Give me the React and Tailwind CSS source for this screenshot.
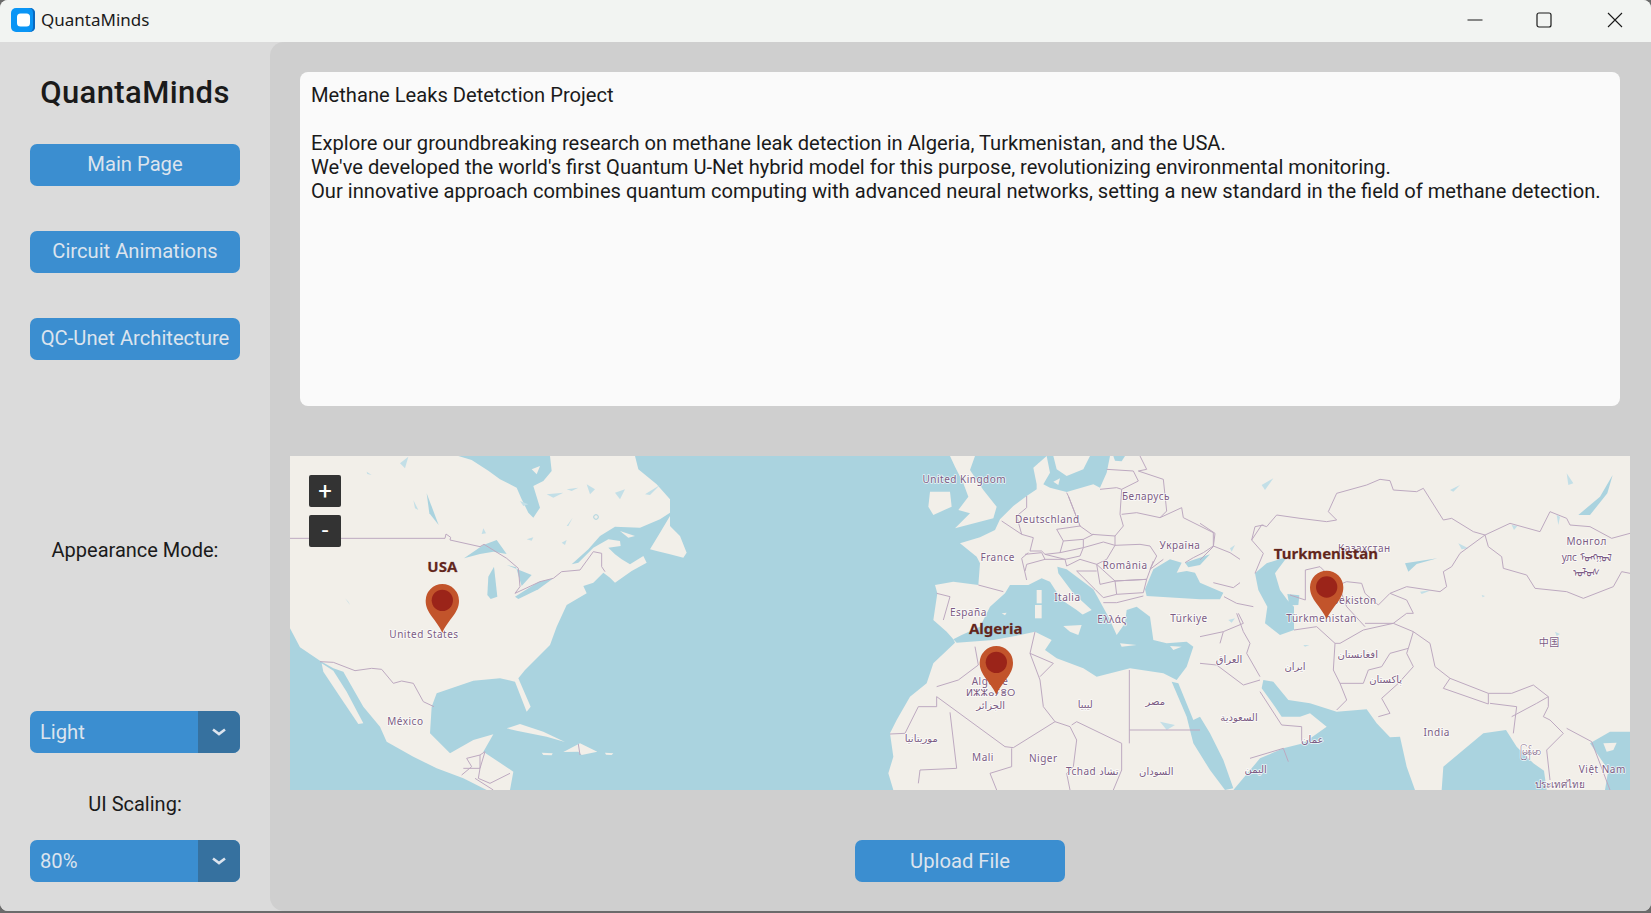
const LAND = "#f2efe9";
const WATER = "#aad3df";
const LAKE = "#c3dfe7";
const BORDER = "#bda9c0";

const naLand = [
  "30,18 535,18 575,30 625,62 660,88 710,113 725,148 745,188 760,203 780,173 760,108 790,93 815,63 810,18 1065,18 1075,58 1130,103 1170,148 1170,188 1140,208 1080,233 1005,230 960,258 925,298 875,343 895,338 940,293 985,268 1020,273 1022,288 985,293 1005,313 1025,328 1050,343 1090,318 1100,338 1055,363 1005,398 990,383 970,368 940,398 910,408 920,430 860,465 830,530 810,585 735,660 715,685 752,770 740,785 705,695 660,685 580,692 470,730 455,770 450,850 510,910 580,870 640,853 610,905 700,965 690,1020 620,1020 550,985 470,955 400,920 320,875 300,830 250,770 190,665 160,655 120,632 60,592 30,535",
  "125,640 160,662 200,725 250,820 235,822 180,740 130,665",
];
const naIslands = [
  "680,835 720,822 790,845 855,876 800,860 710,842",
  "850,906 900,880 952,905 905,915 895,905",
  "785,908 818,910 815,916 790,915",
  "975,908 1000,910 995,915 978,914",
  "1110,298 1140,248 1170,198 1170,228 1200,258 1220,308 1210,323 1170,313 1130,303",
  "1020,243 1065,258 1045,263",
  "755,58 780,48 770,73",
];
const naWater = [
  "552,325 610,285 650,270 680,312 640,305 600,312",
  "622,435 625,380 642,350 652,440 632,447",
  "680,345 755,375 725,408 708,352",
  "705,440 775,396 820,385 775,418 715,447",
  "440,130 476,225 448,190",
];
const naLakes = [
  "400,150 415,180 405,175",
  "205,455 195,445 210,465",
  "610,235 618,250 605,252",
  "260,65 275,75 262,72",
  "360,40 385,20 375,55",
  "720,153 745,163 730,168",
  "800,133 850,128 820,143",
  "860,118 895,113 875,123",
  "920,103 945,118 930,133",
  "1005,128 1035,118 1020,148",
  "860,228 878,203 865,228",
  "845,278 860,270 855,285",
  "740,268 760,262 755,272",
  "1095,133 1140,105 1110,135",
];
const naBorders = [
  "30,265 495,265 498,252 512,262 510,270 600,290 612,283 680,325 715,355 720,410 705,430 780,395 820,385 845,365 900,360 940,305 965,310 965,350 975,365",
  "120,635 160,637 225,662 275,655 305,658 340,700 365,693 400,700 430,755 462,770",
  "545,975 575,950 560,925 600,915 600,955 550,955",
  "600,915 615,905 600,955 595,985 630,1000 690,970",
  "585,985 640,1020",
  "895,882 900,915",
];

const euLand = "980,18 940,53 950,103 950,118 920,138 880,168 840,208 825,240 780,262 720,280 770,320 780,340 775,405 700,395 645,405 652,430 640,510 680,545 700,568 705,578 640,640 620,700 570,740 530,810 510,850 520,920 505,970 520,1020 1440,1020 1440,18";
const euIslands = [
  "690,18 765,18 750,60 790,120 830,170 820,205 705,235 750,190 715,180 745,140 730,100 705,50",
  "630,125 690,125 695,170 640,195 625,170",
];
const euWater = [
  "980,18 1000,18 1010,58 1040,78 1090,58 1110,18 1170,18 1160,68 1140,113 1120,103 1040,126 990,113 970,103 990,68",
  "1180,18 1215,18 1205,34 1185,32",
  "700,568 725,555 780,530 810,470 855,430 870,405 925,405 965,385 990,395 1025,450 1070,480 1112,512 1085,545 1060,530 1075,500 1115,480 1060,430 1015,370 1012,350 1040,358 1120,418 1165,500 1190,555 1215,520 1220,480 1250,470 1290,500 1300,570 1340,580 1400,575 1420,590 1400,650 1370,690 1330,670 1230,655 1130,680 1090,655 1010,625 975,600 995,570 945,545 900,555 820,570 710,578",
  "1275,418 1300,358 1350,328 1385,338 1370,368 1400,363 1425,368 1440,398 1510,428 1500,448 1440,448 1280,438",
  "1395,338 1470,313 1440,345 1405,352",
  "1420,810 1440,800 1470,850 1510,930 1540,1015 1515,1020 1470,960 1420,880 1400,800 1355,695 1375,700",
];
const euLakes = ["1320,815 1365,825 1340,840"];
const euOnWater = [
  "1030,528 1085,525 1075,555 1050,545",
  "950,420 965,420 965,460 950,460",
  "945,465 965,465 965,505 945,505",
  "1200,580 1250,585 1205,590",
  "1350,588 1385,590 1360,600",
  "845,490 860,488 855,496",
  "955,40 985,55 965,75",
  "1000,95 1020,85 1015,105",
];
const euBorders = [
  "650,710 715,690 775,645 765,590",
  "650,740 650,770 595,770 555,850 510,852",
  "650,740 855,890 880,893 1005,815 970,770 960,690 930,610 945,545",
  "930,610 1000,640 960,680",
  "690,787 710,955 600,960 595,1000",
  "875,895 875,950 810,970 830,1020",
  "1005,815 1050,830 1070,870 1060,950 1040,970 1050,1020",
  "1055,825 1070,815 1205,880 1205,960 1180,1020",
  "1228,660 1228,880",
  "1228,840 1440,840",
  "925,308 905,325 920,390",
  "775,405 850,425",
  "650,430 690,440 670,510",
];
const centralEurope = [
  "80,120 80,155 50,180 65,235 100,245 90,285 125,285 135,295 180,290 190,255 170,220 240,210 205,120 200,110",
  "205,120 240,210 275,235 345,240 370,210 360,175 365,100 350,95 300,100",
  "190,255 250,250 280,235",
  "250,250 250,275 310,258 345,268 345,240",
  "365,175 410,170 480,185 500,165 490,70 415,45 440,40 420,0",
  "320,40 400,45 415,75 365,100",
  "480,185 545,155 550,185 640,230 640,270 610,290 580,305 555,320",
  "345,268 420,265 450,270 470,300 450,340 490,310",
  "345,268 320,310 290,325 345,375 440,370 460,315",
  "180,290 250,275 240,300 195,310 135,295",
  "75,295 125,290 135,310 80,325 75,345",
  "135,310 195,310 200,330 240,310",
  "240,310 290,325 300,385 345,375 350,415 310,425 285,400 230,345 290,345",
  "345,375 440,370 430,410 350,415",
  "310,440 350,440 430,420",
  "5,195 65,235",
  "640,380 700,395 720,380",
  "640,270 690,290 720,310",
];

const asWater = [
  "100,1020 180,925 250,895 310,880 380,830 330,790 300,800 245,800 225,770 185,715 190,690 220,695 265,750 330,760 410,785 500,778 530,820 570,862 600,860 620,950 645,1020",
  "725,1020 730,950 850,850 918,840 950,890 1000,940 1032,962 1040,1020",
  "1215,1020 1225,960 1170,880 1230,845 1290,845 1290,1020",
  "165,370 200,340 262,320 225,370 240,420 262,450 282,470 282,540 240,555 195,520 202,470 175,420",
  "262,432 298,436 295,465 268,466",
  "615,340 712,325 650,342 625,365",
  "1135,195 1200,140 1238,75 1222,130 1170,195",
];
const asLakes = [
  "1070,195 1080,200 1075,225",
  "935,225 952,228 942,240",
  "660,425 695,420 665,432",
  "775,280 805,295 785,298",
  "845,435 855,438 848,442",
  "1065,545 1080,552 1070,558",
  "85,510 105,505 95,518",
  "185,105 220,85 195,120",
  "90,295 105,285 95,305",
  "1100,70 1120,100 1105,105",
  "750,120 780,105 760,125",
  "310,585 328,585 315,590",
];
const asIslands = ["1210,880 1250,878 1240,900 1220,905"];
const asBorders = [
  "155,270 185,225 200,230 230,195 300,205 380,215 410,210 385,185 410,130 500,105 540,88 570,92 580,120 650,125 670,115 730,210 755,205 820,245 855,255",
  "155,270 165,230 190,225",
  "155,270 190,310 165,370",
  "855,255 780,310 755,350 730,365 740,410 720,425 620,410 570,430 535,465 495,430 485,400 440,395 415,405 360,350 316,360 316,450 270,435",
  "855,255 930,220 1020,245 1050,185 1100,205 1110,225 1170,230 1235,265 1290,250",
  "855,255 865,290 905,320 910,355 980,375 1005,415 1100,425 1150,445 1240,410 1265,365 1290,370",
  "640,545 690,580 705,650 750,685 865,730 935,730 1000,705 1045,740 1045,770 1030,800 1050,810 1090,850",
  "750,685 730,715 865,762 865,730",
  "870,760 950,770 940,850",
  "935,800 1010,760 1045,740",
  "1090,850 1040,900 1050,990",
  "1100,835 1175,875 1230,1020",
  "405,580 420,580 490,540 580,520 640,545",
  "405,580 400,660 420,700 490,700 505,660 545,650 570,610 625,595 640,545",
  "420,700 440,750 410,780",
  "625,595 620,610 640,650 595,700 545,745 570,790 535,800",
  "110,490 130,545 150,580 140,610 180,680",
  "0,640 50,645 130,705 180,690",
  "0,560 70,545 130,520 115,490",
  "72,440 110,460 160,470",
  "282,540 350,530 405,580",
  "495,530 440,470 415,405",
  "495,520 580,520 620,490 640,490 620,450 570,430",
  "180,725 245,825 305,830 305,880",
  "150,925 250,895 265,935",
  "60,580 70,545",
  "0,220 45,250 40,290 0,330",
];

function Poly({ list, fill, stroke }) {
  return list.map((p, i) => (
    <polyline key={i} points={p} fill={fill || "none"} stroke={stroke || "none"} strokeWidth={stroke ? 3 : 0} strokeLinejoin="round" />
  ));
}

function L({ x, y, t, size = 30, sp = 1.5 }) {
  return (
    <text x={x} y={y} textAnchor="middle" dominantBaseline="central" fontSize={size} letterSpacing={sp} fill="#7c5c84" stroke="#ffffff" strokeOpacity="0.75" strokeWidth="5" paintOrder="stroke" strokeLinejoin="round">
      {t}
    </text>
  );
}

function B({ x, y, t }) {
  return (
    <text x={x} y={y} textAnchor="middle" dominantBaseline="central" fontSize="45" fontWeight="700" fill="#62261c" stroke="#62261c" strokeOpacity="0.5" strokeWidth="1">
      {t}
    </text>
  );
}

function Pin({ dx, dy }) {
  return (
    <g transform={`translate(${dx} ${dy})`}>
      <path d="M487 548C470 508 437 490 437 452A50 50 0 1 1 537 452C537 490 504 508 487 548Z" fill="#c2542b" />
      <circle cx="487" cy="451" r="32" fill="#9b2419" />
    </g>
  );
}

function MapArt() {
  return (
    <svg viewBox="30 18 4020 1002" className="block w-[1340px] h-[334px] font-['Noto_Sans','DejaVu_Sans','Noto_Sans_CJK_SC',sans-serif]">
      <rect x="30" y="18" width="4020" height="1002" fill={WATER} />
      <rect x="2760" y="18" width="1290" height="1002" fill={LAND} />
      <Poly list={naLand} fill={LAND} />
      <Poly list={naIslands} fill={LAND} />
      <Poly list={naWater} fill={WATER} />
      <Poly list={naLakes} fill={LAKE} />
      <circle cx="948" cy="201" r="7" fill="none" stroke={WATER} strokeWidth="3" />
      <Poly list={naBorders} stroke={BORDER} />

      <g transform="translate(1320 0)">
        <polygon points={euLand} fill={LAND} />
        <Poly list={euIslands} fill={LAND} />
        <Poly list={euWater} fill={WATER} />
        <Poly list={euLakes} fill={LAKE} />
        <Poly list={euOnWater} fill={LAND} />
        <Poly list={euBorders} stroke={BORDER} />
        <g transform="translate(840 18)">
          <Poly list={centralEurope} stroke={BORDER} />
        </g>
      </g>

      <g transform="translate(2760 0)">
        <Poly list={asWater} fill={WATER} />
        <Poly list={asLakes} fill={LAKE} />
        <Poly list={asIslands} fill={LAND} />
        <Poly list={asBorders} stroke={BORDER} />
      </g>

      <L x={432} y={551} t="United States" />
      <L x={376} y={814} t="México" />

      <g transform="translate(1320 0)">
        <L x={733} y={88} t="United Kingdom" />
        <L x={1278} y={137} t="Беларусь" />
        <L x={982} y={208} t="Deutschland" />
        <L x={1380} y={285} t="Україна" />
        <L x={833} y={321} t="France" />
        <L x={1215} y={344} t="România" />
        <L x={1042} y={442} t="Italia" />
        <L x={745} y={485} t="España" />
        <L x={1176} y={508} t="Ελλάς" />
        <L x={1407} y={503} t="Türkiye" />
        <L x={810} y={692} t="Algérie" />
        <L x={812} y={727} t="ⵍⵣⵣⴰⵢⴻⵔ" size={28} sp={0.5} />
        <L x={812} y={765} t="الجزائر" sp={0} />
        <L x={1096} y={762} t="ليبيا" sp={0} />
        <L x={1306} y={752} t="مصر" sp={0} />
        <L x={604} y={863} t="موريتانيا" sp={0} />
        <L x={789} y={922} t="Mali" />
        <L x={970} y={923} t="Niger" />
        <L x={1117} y={962} t="Tchad تشاد" />
        <L x={1309} y={962} t="السودان" sp={0} />
      </g>

      <g transform="translate(2760 0)">
        <L x={493} y={295} t="Казахстан" />
        <L x={1160} y={272} t="Монгол" />
        <L x={1160} y={320} t="улс ᠮᠣᠩᠭᠣᠯ" sp={0} size={30} />
        <L x={1160} y={366} t="ᠤᠯᠤᠰ" sp={0} size={30} />
        <L x={440} y={450} t="Oʻzbekiston" />
        <L x={365} y={505} t="Türkmenistan" />
        <L x={473} y={612} t="افغانستان" sp={0} />
        <L x={557} y={687} t="پاکستان" sp={0} />
        <L x={285} y={647} t="ایران" sp={0} />
        <L x={87} y={627} t="العراق" sp={0} />
        <L x={117} y={802} t="السعودية" sp={0} />
        <L x={337} y={867} t="عمان" sp={0} />
        <L x={167} y={958} t="اليمن" sp={0} />
        <L x={710} y={847} t="India" />
        <L x={1048} y={576} t="中国" />
        <L x={990} y={902} t="မြန်မာ" sp={0} />
        <L x={1207} y={957} t="Việt Nam" />
        <L x={1080} y={1003} t="ประเทศไทย" sp={0} />
      </g>

      <Pin dx={0} dy={0} />
      <Pin dx={1662} dy={186} />
      <Pin dx={2653} dy={-40} />

      <B x={487} y={347} t="USA" />
      <B x={2147} y={534} t="Algeria" />
      <B x={3138} y={309} t="Turkmenistan" />
    </svg>
  );
}

function Btn({ children }) {
  return (
    <button className="block w-[210px] h-[42px] shrink-0 rounded-[7px] bg-[#3b8ed0] text-[#dce4ee] text-[20.2px] leading-[40px] pb-[2px] text-center">
      {children}
    </button>
  );
}

function Select({ value, className }) {
  return (
    <div className={`w-[210px] h-[42px] shrink-0 rounded-[7px] overflow-hidden flex bg-[#3b8ed0] ${className || ""}`}>
      <div className="flex-1 pl-[10px] text-[#dce4ee] text-[20.2px] leading-[42px]">{value}</div>
      <div className="w-[42px] bg-[#36719f] flex items-center justify-center">
        <svg width="16" height="10" viewBox="0 0 16 10">
          <path d="M2 2.5L8 7L14 2.5" fill="none" stroke="#dce4ee" strokeWidth="2.6" />
        </svg>
      </div>
    </div>
  );
}

export default function App() {
  return (
    <div className="w-[1651px] h-[913px] bg-[#6b6b6b] overflow-hidden font-['Roboto',sans-serif]">
      <div className="h-[911px] rounded-[8px] overflow-hidden flex flex-col bg-[#dbdbdb]">
        <div className="h-[42px] shrink-0 bg-[#f2f4f2] flex items-center pb-[3px]">
          <svg width="24" height="24" viewBox="0 0 24 24" className="ml-[11px]">
            <rect width="24" height="24" rx="5" fill="#0a95f5" />
            <path d="M19 0H19A5 5 0 0 1 24 5V19A5 5 0 0 1 19 24H17Q22 24 22 19V5Q22 0 17 0Z" fill="#0a68c0" />
            <rect x="6" y="5.5" width="13" height="13" rx="3.5" fill="#ffffff" />
          </svg>
          <span className="ml-[6px] text-[17px] text-[#1a1a1a] font-['Noto_Sans',sans-serif]">QuantaMinds</span>
          <div className="ml-auto flex items-center">
            <svg width="16" height="16" viewBox="0 0 16 16" className="mr-[53px]">
              <path d="M0.5 8H15.5" stroke="#1a1a1a" strokeWidth="1" />
            </svg>
            <svg width="16" height="16" viewBox="0 0 16 16" className="mr-[55px]">
              <rect x="1" y="1" width="14" height="14" rx="2" fill="none" stroke="#1a1a1a" strokeWidth="1.2" />
            </svg>
            <svg width="16" height="16" viewBox="0 0 16 16" className="mr-[28px]">
              <path d="M1 1L15 15M15 1L1 15" stroke="#1a1a1a" strokeWidth="1.1" />
            </svg>
          </div>
        </div>

        <div className="flex-1 flex min-h-0">
          <aside className="w-[270px] shrink-0 flex flex-col items-center bg-[#dbdbdb] text-[#1a1a1a]">
            <h1 className="mt-[32px] h-[38px] leading-[38px] text-[31px] font-medium tracking-[0.4px]">QuantaMinds</h1>
            <div className="mt-[32px] flex flex-col gap-[45px]">
              <Btn>Main Page</Btn>
              <Btn>Circuit Animations</Btn>
              <Btn>QC-Unet Architecture</Btn>
            </div>
            <div className="mt-[176px] h-[28px] leading-[28px] text-[20px]">Appearance Mode:</div>
            <Select value="Light" className="mt-[147px]" />
            <div className="mt-[37px] h-[28px] leading-[28px] text-[20px]">UI Scaling:</div>
            <Select value="80%" className="mt-[22px]" />
          </aside>

          <main className="flex-1 min-w-0 rounded-l-[14px] bg-[#cfcfcf] flex flex-col pt-[30px]">
            <div className="ml-[30px] w-[1320px] h-[334px] rounded-[8px] bg-[#fafafa] px-[11px] pt-[11px] text-[20.15px] leading-[24px] text-[#1a1a1a] whitespace-nowrap">
              <p>Methane Leaks Detetction Project</p>
              <p>&nbsp;</p>
              <p>Explore our groundbreaking research on methane leak detection in Algeria, Turkmenistan, and the USA.</p>
              <p>We've developed the world's first Quantum U-Net hybrid model for this purpose, revolutionizing environmental monitoring.</p>
              <p>Our innovative approach combines quantum computing with advanced neural networks, setting a new standard in the field of methane detection.</p>
            </div>
            <div className="relative ml-[20px] mt-[50px] w-[1340px] h-[334px] shrink-0">
              <MapArt />
              <div className="absolute left-[19px] top-[19px] w-[32px] h-[32px] rounded-[2px] bg-[#333333] text-white text-[24px] leading-[32px] text-center">+</div>
              <div className="absolute left-[19px] top-[59px] w-[32px] h-[32px] rounded-[2px] bg-[#333333] text-white text-[24px] leading-[30px] text-center">-</div>
            </div>
            <button className="block mt-[50px] ml-[585px] w-[210px] h-[42px] shrink-0 rounded-[7px] bg-[#3b8ed0] text-[#dce4ee] text-[20.2px] leading-[42px] text-center">
              Upload File
            </button>
          </main>
        </div>
      </div>
    </div>
  );
}
